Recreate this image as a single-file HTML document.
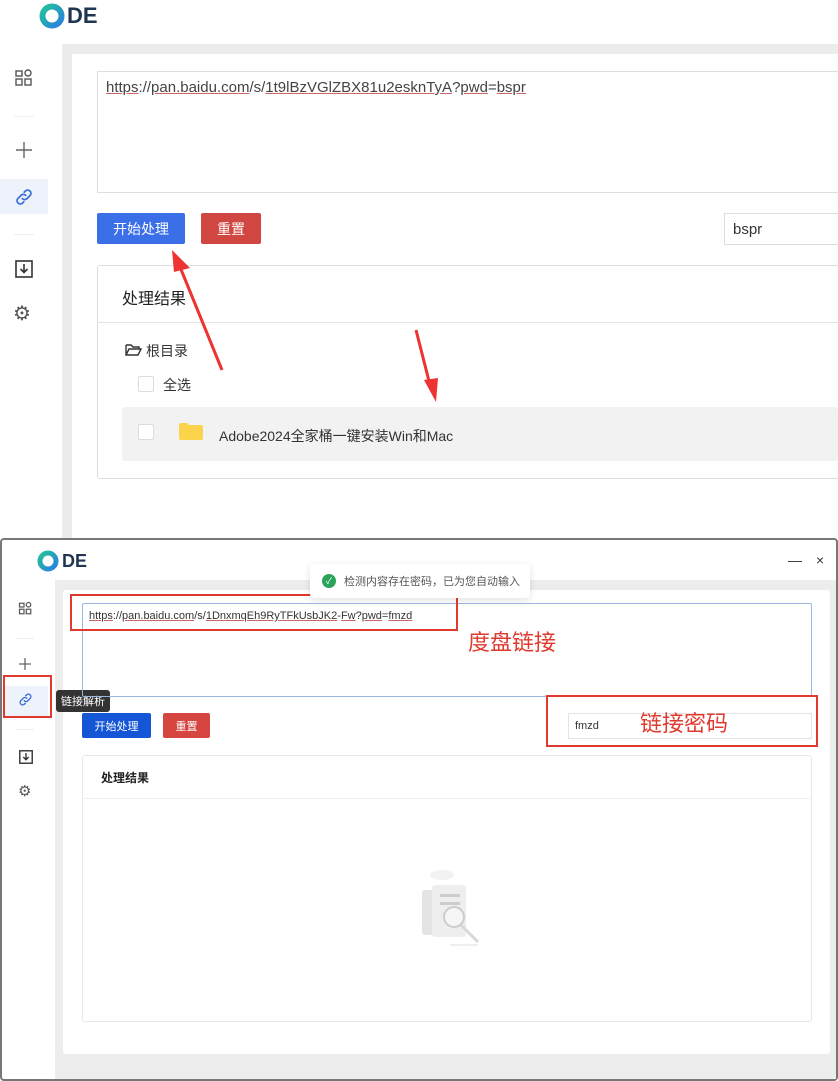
<!DOCTYPE html>
<html><head><meta charset="utf-8"><style>
*{box-sizing:border-box;margin:0;padding:0}
body{width:838px;height:1081px;position:relative;overflow:hidden;background:#fff;font-family:"Liberation Sans","Noto Sans CJK SC",sans-serif;color:#333}
.a{position:absolute}
.logo{font-weight:bold;color:#1f3550}
.btn{color:#fff;font-size:14px;display:flex;align-items:center;justify-content:center;border-radius:2px}
.cb{border:1px solid #ddd;background:#fff;border-radius:2px}
.red{border:2px solid #e03a2e}
.ann{color:#e03a2e;font-size:22px}
.ul{text-decoration:underline;text-decoration-color:#c66}
</style></head><body>
<svg width="0" height="0" style="position:absolute"><defs>
<linearGradient id="g" x1="0" y1="0" x2="1" y2="1"><stop offset="0" stop-color="#22c29a"/><stop offset="1" stop-color="#2a7fe0"/></linearGradient>
<symbol id="lnk" viewBox="0 0 20 20"><g fill="none" stroke="#3a6fd8" stroke-width="1.6" stroke-linecap="round"><path d="M8.5 11.5a3 3 0 0 0 4.2 0l3-3a3 3 0 0 0-4.2-4.2l-1.3 1.3"/><path d="M11.5 8.5a3 3 0 0 0-4.2 0l-3 3a3 3 0 0 0 4.2 4.2l1.3-1.3"/></g></symbol>
</defs></svg>
<!-- TOP SCREENSHOT -->
<svg class="a" style="left:39px;top:3px" width="26" height="26"><circle cx="13" cy="13" r="9.5" fill="none" stroke="url(#g)" stroke-width="6"/></svg>
<div class="a logo" style="left:67px;top:3px;font-size:22px">DE</div>
<div class="a" style="left:62px;top:44px;width:776px;height:496px;background:#ececec"></div>
<div class="a" style="left:72px;top:54px;width:766px;height:486px;background:#fff"></div>
<svg class="a" style="left:14px;top:68px" width="20" height="20" viewBox="0 0 20 20" fill="none" stroke="#555" stroke-width="1.4"><rect x="2" y="3" width="6" height="5"/><rect x="11" y="2" width="6" height="6" rx="3"/><rect x="2" y="11" width="6" height="6"/><rect x="11" y="11" width="6" height="6"/></svg>
<div class="a" style="left:14px;top:116px;width:20px;height:1px;background:#eee"></div>
<svg class="a" style="left:14px;top:140px" width="20" height="20" stroke="#666" stroke-width="1.4"><path d="M10 2v16M2 10h16"/></svg>
<div class="a" style="left:0;top:179px;width:48px;height:35px;background:#eef2fb"></div>
<svg class="a" style="left:13px;top:186px" width="22" height="22"><use href="#lnk"/></svg>
<div class="a" style="left:14px;top:234px;width:20px;height:1px;background:#eee"></div>
<svg class="a" style="left:15px;top:260px" width="18" height="18" viewBox="0 0 18 18" fill="none" stroke="#333" stroke-width="1.6"><rect x="1" y="1" width="16" height="16"/><path d="M9 4v8M5.5 9L9 12.5 12.5 9"/></svg>
<div class="a" style="left:13px;top:301px;font-size:20px;color:#555">⚙</div>
<div class="a" style="left:97px;top:71px;width:760px;height:122px;border:1px solid #ddd"></div>
<div class="a" style="left:106px;top:79px;font-size:15px;color:#444"><span class="ul">https</span>://<span class="ul">pan.baidu.com</span>/s/<span class="ul">1t9lBzVGlZBX81u2esknTyA</span>?<span class="ul">pwd</span>=<span class="ul">bspr</span></div>
<div class="a btn" style="left:97px;top:213px;width:88px;height:31px;background:#3b6fe8">开始处理</div>
<div class="a btn" style="left:201px;top:213px;width:60px;height:31px;background:#d04640">重置</div>
<div class="a" style="left:724px;top:213px;width:130px;height:32px;border:1px solid #ddd;font-size:15px;padding:7px 8px">bspr</div>
<div class="a" style="left:97px;top:265px;width:760px;height:214px;border:1px solid #ddd;border-radius:3px"></div>
<div class="a" style="left:97px;top:322px;width:760px;height:1px;background:#e3e3e3"></div>
<div class="a" style="left:122px;top:285px;font-size:16px;color:#222">处理结果</div>
<svg class="a" style="left:125px;top:343px" width="17" height="14" fill="none" stroke="#333" stroke-width="1.4"><path d="M1 2h5l2 2h6v2M1 2v10h12l3-6H4L1 12"/></svg>
<div class="a" style="left:146px;top:341px;font-size:14px">根目录</div>
<div class="a cb" style="left:138px;top:376px;width:16px;height:16px"></div>
<div class="a" style="left:163px;top:375px;font-size:14px">全选</div>
<div class="a" style="left:122px;top:407px;width:716px;height:54px;background:#f2f2f2;border-radius:3px"></div>
<div class="a cb" style="left:138px;top:424px;width:16px;height:16px"></div>
<svg class="a" style="left:179px;top:421px" width="24" height="20"><path d="M0 4a2 2 0 0 1 2-2h6l2 2h12a2 2 0 0 1 2 2v11a2 2 0 0 1-2 2H2a2 2 0 0 1-2-2z" fill="#fbd44b"/></svg>
<div class="a" style="left:219px;top:426px;font-size:14px;color:#333">Adobe2024全家桶一键安装Win和Mac</div>
<svg class="a" style="left:0;top:0" width="838" height="540"><path d="M222 370 L178 262" stroke="#e33" stroke-width="3"/><polygon points="172,250 190,268 174,272" fill="#e33"/><path d="M416 330 L430 385" stroke="#e33" stroke-width="3"/><polygon points="436,402 424,380 438,378" fill="#e33"/></svg>

<!-- BOTTOM WINDOW -->
<div class="a" style="left:0;top:538px;width:838px;height:543px;border:2px solid #777;border-radius:4px;background:#fff"></div>
<svg class="a" style="left:37px;top:550px" width="22" height="22"><circle cx="11" cy="11" r="8" fill="none" stroke="url(#g)" stroke-width="5"/></svg>
<div class="a logo" style="left:62px;top:551px;font-size:18px">DE</div>
<div class="a" style="left:788px;top:552px;font-size:14px;color:#333">—</div>
<div class="a" style="left:816px;top:552px;font-size:14px;color:#333">×</div>
<div class="a" style="left:55px;top:580px;width:781px;height:499px;background:#ededed"></div>
<div class="a" style="left:63px;top:590px;width:767px;height:464px;background:#fff;border-radius:3px"></div>
<svg class="a" style="left:18px;top:601px" width="15" height="15" viewBox="0 0 20 20" fill="none" stroke="#555" stroke-width="1.6"><rect x="2" y="3" width="6" height="5"/><rect x="11" y="2" width="6" height="6" rx="3"/><rect x="2" y="11" width="6" height="6"/><rect x="11" y="11" width="6" height="6"/></svg>
<div class="a" style="left:16px;top:638px;width:18px;height:1px;background:#eee"></div>
<svg class="a" style="left:18px;top:657px" width="14" height="14" stroke="#666" stroke-width="1.3"><path d="M7 1v12M1 7h12"/></svg>
<div class="a" style="left:4px;top:686px;width:44px;height:30px;background:#eef2fb"></div>
<div class="a red" style="left:3px;top:675px;width:49px;height:43px"></div>
<svg class="a" style="left:17px;top:691px" width="17" height="17"><use href="#lnk"/></svg>
<div class="a" style="left:16px;top:729px;width:18px;height:1px;background:#eee"></div>
<div class="a" style="left:56px;top:690px;background:#333;color:#fff;font-size:11px;padding:3px 5px;border-radius:3px">链接解析</div>
<svg class="a" style="left:19px;top:750px" width="14" height="14" viewBox="0 0 18 18" fill="none" stroke="#333" stroke-width="1.8"><rect x="1" y="1" width="16" height="16"/><path d="M9 4v8M5.5 9L9 12.5 12.5 9"/></svg>
<div class="a" style="left:18px;top:782px;font-size:15px;color:#555">⚙</div>
<div class="a" style="left:82px;top:603px;width:730px;height:94px;border:1px solid #9bb8e0;border-radius:2px"></div>
<div class="a red" style="left:70px;top:594px;width:388px;height:37px"></div>
<div class="a" style="left:89px;top:610px;font-size:11px;color:#333"><span class="ul">https</span>://<span class="ul">pan.baidu.com</span>/s/<span class="ul">1DnxmqEh9RyTFkUsbJK2</span>-<span class="ul">Fw</span>?<span class="ul">pwd</span>=<span class="ul">fmzd</span></div>
<div class="a ann" style="left:468px;top:625px">度盘链接</div>
<div class="a" style="left:310px;top:564px;width:220px;height:34px;background:#fff;box-shadow:0 2px 8px rgba(0,0,0,.12);border-radius:4px;font-size:11px;color:#555;padding:9px 0 0 34px">检测内容存在密码，已为您自动输入</div>
<div class="a" style="left:322px;top:574px;width:14px;height:14px;border-radius:50%;background:#2aa45a;color:#fff;font-size:9px;text-align:center;line-height:14px">✓</div>
<div class="a btn" style="left:82px;top:713px;width:69px;height:25px;background:#1556d6;font-size:11px">开始处理</div>
<div class="a btn" style="left:163px;top:713px;width:47px;height:25px;background:#d64540;font-size:11px">重置</div>
<div class="a" style="left:568px;top:713px;width:244px;height:26px;border:1px solid #e3e3e3;font-size:11px;padding:6px 6px">fmzd</div>
<div class="a red" style="left:546px;top:695px;width:272px;height:52px"></div>
<div class="a ann" style="left:640px;top:706px">链接密码</div>
<div class="a" style="left:82px;top:755px;width:730px;height:267px;border:1px solid #e8e8e8;border-radius:3px"></div>
<div class="a" style="left:82px;top:798px;width:730px;height:1px;background:#eee"></div>
<div class="a" style="left:101px;top:769px;font-size:12px;font-weight:bold;color:#222">处理结果</div>
<svg class="a" style="left:400px;top:865px" width="90" height="85"><ellipse cx="42" cy="10" rx="12" ry="5" fill="#f2f2f2"/><rect x="22" y="25" width="18" height="45" rx="3" fill="#e4e4e4"/><rect x="32" y="20" width="34" height="52" rx="3" fill="#eee"/><rect x="40" y="29" width="20" height="3" fill="#ccc"/><rect x="40" y="37" width="20" height="3" fill="#ccc"/><circle cx="54" cy="52" r="10" fill="#f6f6f6" stroke="#ccc" stroke-width="2"/><path d="M61 60l17 17" stroke="#d8d8d8" stroke-width="3"/><rect x="50" y="79" width="28" height="2" fill="#eee"/></svg>
</body></html>
